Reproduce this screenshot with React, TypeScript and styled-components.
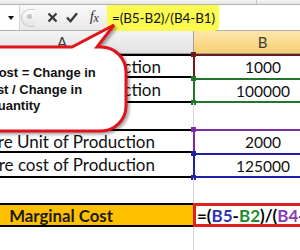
import React from "react";
import styled, { createGlobalStyle } from "styled-components";

const Global = createGlobalStyle`
  html, body { margin: 0; padding: 0; background: #fff; overflow: hidden; }
  #root { width: 300px; height: 250px; }
`;

const Screen = styled.div`
  position: relative;
  width: 300px;
  height: 250px;
  overflow: hidden;
  background: #fff;
  font-family: Lato, "Noto Sans", sans-serif;
  color: #000;
`;

const TopStrip = styled.div`
  height: 4px;
  background: linear-gradient(#f6f6f6, #e4e4e4);
  border-bottom: 1px solid #b5b5b5;
  display: flex;
  justify-content: flex-end;
`;

const TopCell = styled.div`
  width: 43px;
  border-left: 1px solid #c2c2c2;
`;

const FormulaBar = styled.div`
  height: 25px;
  display: flex;
  border-bottom: 1px solid #b0b0b0;
`;

const NameBox = styled.div`
  width: 20px;
  background: #fff;
  display: flex;
  align-items: center;
  justify-content: flex-end;
  padding-right: 5px;
  box-sizing: border-box;
  border-right: 1px solid #d6d6d6;
`;

const DropArrow = styled.div`
  width: 0;
  height: 0;
  border-left: 3px solid transparent;
  border-right: 3px solid transparent;
  border-top: 4px solid #111;
  margin-top: 1px;
`;

const Controls = styled.div`
  width: 87px;
  display: flex;
  align-items: center;
  padding-left: 1px;
  box-sizing: border-box;
  background: linear-gradient(#f9f9f9, #e9e9e9);
`;

const Grip = styled.div`
  width: 14px;
  height: 18px;
  border: 1px solid #cacaca;
  border-right: none;
  border-radius: 10px 0 0 10px;
  background: linear-gradient(#fbfbfb, #e4e4e4);
  display: flex;
  justify-content: center;
  padding-top: 4px;
  box-sizing: border-box;
`;

const GripDot = styled.div`
  width: 5px;
  height: 5px;
  border-radius: 50%;
  background: #c4c4c4;
  margin-left: 2px;
`;

const IconButton = styled.div<{ $ml?: number }>`
  width: 20px;
  height: 25px;
  margin-left: ${(p) => p.$ml ?? 0}px;
  display: flex;
  align-items: center;
  justify-content: center;
  color: #3b3b3b;
`;

const FxText = styled.span`
  font-family: "Liberation Serif", "DejaVu Serif", serif;
  font-style: italic;
  font-size: 15px;
  color: #333;
  letter-spacing: -0.5px;
  line-height: 1;
  margin-top: -2px;
`;

const FxSub = styled.span`
  font-size: 12px;
  position: relative;
  top: 1px;
`;

const FormulaInput = styled.div`
  flex: 1;
  background: #fff;
  display: flex;
  align-items: flex-start;
`;

const Highlight = styled.div`
  height: 26px;
  line-height: 26px;
  background: #fafa50;
  padding: 0 4px 0 5px;
  border-radius: 0 0 5px 0;
  font-size: 13.5px;
  letter-spacing: -0.1px;
  color: #111;
  white-space: nowrap;
`;

const Sheet = styled.div`
  margin-left: -69px;
  display: grid;
  grid-template-columns: 262px 138px;
  grid-template-rows: 23px 24px 25px 26px 24px 25px 25px 24px 30px;
`;

const ColHeader = styled.div<{ $selected?: boolean }>`
  display: flex;
  align-items: center;
  justify-content: center;
  font-size: 15px;
  color: #3c3c3c;
  box-sizing: border-box;
  border-bottom: 1px solid #9b9b9b;
  background: ${(p) =>
    p.$selected
      ? "linear-gradient(#fde6ab, #f8cf72)"
      : "linear-gradient(#f4f4f4, #e2e2e2)"};
  border-left: ${(p) => (p.$selected ? "1px solid #a3a3a3" : "none")};
`;

const LabelCell = styled.div<{
  $pr?: number;
  $top?: boolean;
  $bottom?: boolean;
  $fill?: string;
  $bold?: boolean;
}>`
  display: flex;
  align-items: center;
  justify-content: flex-end;
  padding-right: ${(p) => p.$pr ?? 0}px;
  box-sizing: border-box;
  overflow: hidden;
  white-space: nowrap;
  font-size: ${(p) => (p.$bold ? 16.8 : 17)}px;
  font-weight: ${(p) => (p.$bold ? 700 : 400)};
  color: ${(p) => (p.$bold ? "#1a1a1a" : "#111")};
  background: ${(p) => p.$fill ?? "#fff"};
  border-top: ${(p) => (p.$top ? "2px solid #000" : "none")};
  border-bottom: ${(p) => (p.$bottom ? "2px solid #000" : "none")};
`;

const ValueCell = styled.div<{
  $color?: string;
  $noBottom?: boolean;
  $cornerBottom?: boolean;
}>`
  position: relative;
  display: flex;
  align-items: center;
  justify-content: center;
  box-sizing: border-box;
  font-size: 15.5px;
  color: #111;
  border-left: ${(p) => (p.$color ? `2px solid ${p.$color}` : "1px solid #d9d9d9")};
  border-top: ${(p) => (p.$color ? `2px solid ${p.$color}` : "none")};
  border-bottom: ${(p) =>
    p.$color && !p.$noBottom ? `2px solid ${p.$color}` : "none"};

  &::before {
    content: "";
    display: ${(p) => (p.$color ? "block" : "none")};
    position: absolute;
    left: -4px;
    top: -4px;
    width: 5px;
    height: 5px;
    background: ${(p) => p.$color};
  }
  &::after {
    content: "";
    display: ${(p) => (p.$color && p.$cornerBottom ? "block" : "none")};
    position: absolute;
    left: -4px;
    bottom: -4px;
    width: 5px;
    height: 5px;
    background: ${(p) => p.$color};
  }
`;

const EditCell = styled.div`
  display: flex;
  align-items: center;
  box-sizing: border-box;
  border: 3px solid #e01e24;
  border-right: none;
  padding-left: 1px;
  font-size: 17px;
  font-weight: 700;
  white-space: nowrap;
  overflow: hidden;
  background: #fff;
`;

const Ref = styled.span<{ $color: string }>`
  color: ${(p) => p.$color};
`;

const CalloutLayer = styled.div`
  position: absolute;
  left: 0;
  top: 0;
  width: 140px;
  height: 140px;
  pointer-events: none;
`;

const CalloutShape = styled.svg`
  position: absolute;
  left: 0;
  top: 0;
  overflow: visible;
  filter: drop-shadow(2px 2px 1.5px rgba(0, 0, 0, 0.35));
`;

const CalloutText = styled.div`
  position: absolute;
  left: -86px;
  top: 65px;
  width: 200px;
  text-align: center;
  font-family: "Liberation Sans", Arial, sans-serif;
  font-weight: 700;
  font-size: 13px;
  line-height: 16.5px;
  color: #111;
  white-space: nowrap;
`;

const XIcon = () => (
  <svg width="11" height="11" viewBox="0 0 11 11">
    <path d="M1.5 1.5 L9.5 9.5 M9.5 1.5 L1.5 9.5" stroke="#3a3a3a" strokeWidth="2.3" strokeLinecap="butt" />
  </svg>
);

const CheckIcon = () => (
  <svg width="12" height="11" viewBox="0 0 12 11">
    <path d="M1 5.5 L4.5 9.2 L11 1.2" stroke="#3a3a3a" strokeWidth="2.4" fill="none" />
  </svg>
);

export default function App() {
  return (
    <Screen>
      <Global />
      <TopStrip>
        <TopCell />
      </TopStrip>
      <FormulaBar>
        <NameBox>
          <DropArrow />
        </NameBox>
        <Controls>
          <Grip>
            <GripDot />
          </Grip>
          <IconButton $ml={7}>
            <XIcon />
          </IconButton>
          <IconButton>
            <CheckIcon />
          </IconButton>
          <IconButton $ml={2}>
            <FxText>
              f<FxSub>x</FxSub>
            </FxText>
          </IconButton>
        </Controls>
        <FormulaInput>
          <Highlight>=(B5-B2)/(B4-B1)</Highlight>
        </FormulaInput>
      </FormulaBar>

      <Sheet>
        <ColHeader>A</ColHeader>
        <ColHeader $selected>B</ColHeader>

        <LabelCell $pr={32} $top $bottom>Current Unit of Production</LabelCell>
        <ValueCell $color="#6e1b1b" $noBottom>1000</ValueCell>

        <LabelCell $pr={32} $bottom>Current cost of Production</LabelCell>
        <ValueCell $color="#21762a" $cornerBottom>100000</ValueCell>

        <LabelCell />
        <ValueCell />

        <LabelCell $pr={38} $top $bottom>Future Unit of Production</LabelCell>
        <ValueCell $color="#7d2aa6" $noBottom>2000</ValueCell>

        <LabelCell $pr={38} $bottom>Future cost of Production</LabelCell>
        <ValueCell $color="#1f1fa8" $cornerBottom>125000</ValueCell>

        <LabelCell />
        <ValueCell />

        <LabelCell $pr={80} $top $bottom $fill="#ffc000" $bold>Marginal Cost</LabelCell>
        <EditCell>
          =(<Ref $color="#2b36b0">B5</Ref>-<Ref $color="#228a2c">B2</Ref>)/(<Ref $color="#8a3bb8">B4</Ref>-<Ref $color="#7a2020">B1</Ref>)
        </EditCell>

        <LabelCell />
        <ValueCell />
      </Sheet>

      <CalloutLayer>
        <CalloutShape width="140" height="140" viewBox="0 0 140 140">
          <path
            d="M -10 47 L 72 47 L 114 25 L 97 47 L 101 47 A 25 25 0 0 1 126 72 L 126 106 A 25 25 0 0 1 101 131 L -10 131 Z"
            fill="#fff"
            stroke="#e0141a"
            strokeWidth="3"
            strokeLinejoin="miter"
          />
        </CalloutShape>
        <CalloutText>
          Marginal Cost = Change in
          <br />
          Total Cost / Change in
          <br />
          Quantity
        </CalloutText>
      </CalloutLayer>
    </Screen>
  );
}
